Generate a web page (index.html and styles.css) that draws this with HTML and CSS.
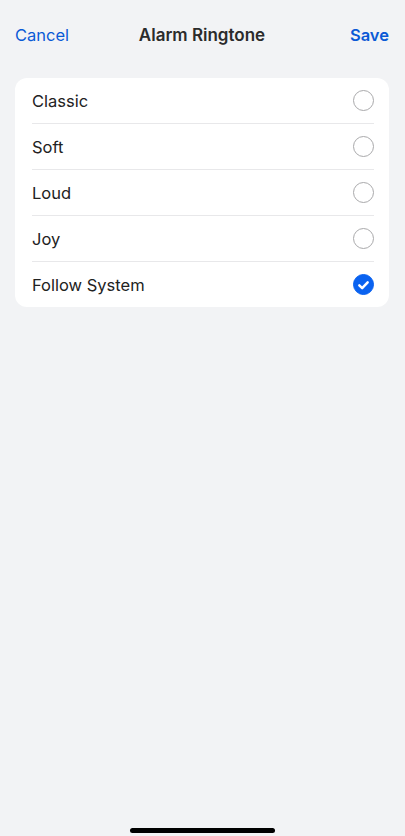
FILE: index.html
```html
<!DOCTYPE html>
<html>
<head>
<meta charset="utf-8">
<link rel="stylesheet" href="styles.css">
</head>
<body>
<div class="screen">
  <header class="nav">
    <span class="nav-btn">Cancel</span>
    <span class="nav-title">Alarm Ringtone</span>
    <span class="nav-btn save">Save</span>
  </header>
  <ul class="card">
    <li class="row"><span class="label">Classic</span><span class="radio"></span></li>
    <li class="row"><span class="label">Soft</span><span class="radio"></span></li>
    <li class="row"><span class="label">Loud</span><span class="radio"></span></li>
    <li class="row"><span class="label">Joy</span><span class="radio"></span></li>
    <li class="row"><span class="label">Follow System</span>
      <span class="radio checked"><svg viewBox="0 0 20 20" width="20" height="20"><path d="M5.6 10.4 L8.6 13.3 L14.4 7.2" fill="none" stroke="#fff" stroke-width="2.6" stroke-linecap="round" stroke-linejoin="round"/></svg></span>
    </li>
  </ul>
  <div class="spacer"></div>
  <div class="home-bar"></div>
</div>
</body>
</html>
```

FILE: styles.css
```css
* { box-sizing: border-box; }
html, body { margin: 0; padding: 0; }
body {
  background: #f2f3f5;
  font-family: Inter, "Liberation Sans", Arial, sans-serif;
  color: #222;
}
.screen {
  width: 405px;
  height: 836px;
  display: flex;
  flex-direction: column;
}
.nav {
  height: 70px;
  padding: 0 16px 1px 15px;
  display: flex;
  align-items: center;
  justify-content: space-between;
}
.nav-btn {
  font-size: 16.5px;
  color: #0a5ad6;
  width: 60px;
}
.nav-btn.save {
  text-align: right;
  font-weight: 600;
}
.nav-title {
  font-size: 17px;
  font-weight: 600;
  color: #2b2b2b;
}
.card {
  list-style: none;
  margin: 8px 16px 0 15px;
  padding: 0 15px 0 17px;
  background: #fff;
  border-radius: 12px;
}
.row {
  height: 46px;
  display: flex;
  align-items: center;
  justify-content: space-between;
  border-bottom: 1px solid #e8e8ea;
}
.row:last-child { border-bottom: none; height: 45px; }
.label {
  font-size: 16.5px;
  color: #222;
}
.radio {
  width: 21px;
  height: 21px;
  border-radius: 50%;
  border: 1px solid #a9a9ab;
  display: flex;
  align-items: center;
  justify-content: center;
}
.radio.checked {
  background: #0a62f0;
  border-color: #0a62f0;
}
.spacer { flex: 1; }
.home-bar {
  width: 145px;
  height: 5px;
  border-radius: 3px;
  background: #000;
  margin: 0 0 3px 130px;
}
```
